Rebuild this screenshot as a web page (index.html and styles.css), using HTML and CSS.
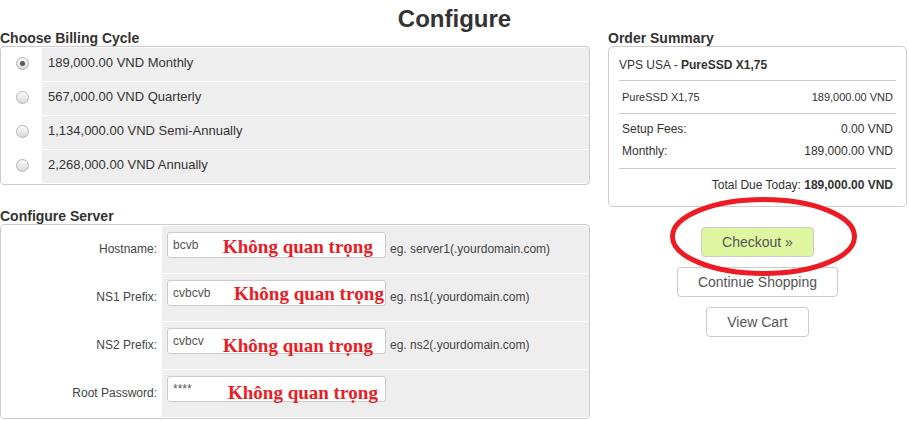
FILE: index.html
```html
<!DOCTYPE html>
<html lang="vi">
<head>
  <meta charset="UTF-8" />
  <meta name="viewport" content="width=device-width, initial-scale=1.0" />
  <title>Configure</title>
  <link rel="stylesheet" href="styles.css">
</head>
<body>
  <h1 class="page-title">Configure</h1>

  <div class="columns">
    <!-- Left: billing + server config -->
    <div class="main-col">
      <h3 class="section-title">Choose Billing Cycle</h3>
      <div class="cycle-box">
        <div class="cycle-row">
          <div class="cycle-radio"><span class="radio checked"></span></div>
          <div class="cycle-label">189,000.00 VND Monthly</div>
        </div>
        <div class="cycle-row">
          <div class="cycle-radio"><span class="radio"></span></div>
          <div class="cycle-label">567,000.00 VND Quarterly</div>
        </div>
        <div class="cycle-row">
          <div class="cycle-radio"><span class="radio"></span></div>
          <div class="cycle-label">1,134,000.00 VND Semi-Annually</div>
        </div>
        <div class="cycle-row">
          <div class="cycle-radio"><span class="radio"></span></div>
          <div class="cycle-label">2,268,000.00 VND Annually</div>
        </div>
      </div>

      <h3 class="section-title server-title">Configure Server</h3>
      <div class="server-box">
        <div class="server-row">
          <div class="server-label">Hostname:</div>
          <div class="server-field">
            <div class="field">
              <input type="text" value="bcvb">
              <span class="note note-1">Không quan trọng</span>
            </div>
            <span class="hint">eg. server1(.yourdomain.com)</span>
          </div>
        </div>
        <div class="server-row">
          <div class="server-label">NS1 Prefix:</div>
          <div class="server-field">
            <div class="field">
              <input type="text" value="cvbcvb">
              <span class="note note-2">Không quan trọng</span>
            </div>
            <span class="hint">eg. ns1(.yourdomain.com)</span>
          </div>
        </div>
        <div class="server-row">
          <div class="server-label">NS2 Prefix:</div>
          <div class="server-field">
            <div class="field">
              <input type="text" value="cvbcv">
              <span class="note note-3">Không quan trọng</span>
            </div>
            <span class="hint">eg. ns2(.yourdomain.com)</span>
          </div>
        </div>
        <div class="server-row">
          <div class="server-label">Root Password:</div>
          <div class="server-field">
            <div class="field">
              <input type="text" value="****">
              <span class="note note-4">Không quan trọng</span>
            </div>
          </div>
        </div>
      </div>
    </div>

    <!-- Right: order summary -->
    <div class="side-col">
      <h3 class="section-title">Order Summary</h3>
      <div class="summary">
        <div class="summary-title">VPS USA - <b>PureSSD X1,75</b></div>
        <div class="summary-item">
          <span>PureSSD X1,75</span>
          <span>189,000.00 VND</span>
        </div>
        <div class="summary-fees">
          <div class="fee-row"><span>Setup Fees:</span><span>0.00 VND</span></div>
          <div class="fee-row"><span>Monthly:</span><span>189,000.00 VND</span></div>
        </div>
        <div class="summary-total">Total Due Today: <b>189,000.00 VND</b></div>
      </div>

      <div class="actions">
        <button class="btn btn-checkout">Checkout &raquo;</button>
        <button class="btn">Continue Shopping</button>
        <button class="btn">View Cart</button>
        <!-- hand-drawn highlight -->
        <svg class="circle-mark" width="188" height="80" viewBox="0 0 188 80">
          <ellipse cx="93.5" cy="39.5" rx="91" ry="37" fill="none" stroke="#ed1c24" stroke-width="5"/>
        </svg>
      </div>
    </div>
  </div>
</body>
</html>
```

FILE: styles.css
```css
body {
  margin: 0;
  font-family: "Liberation Sans", Arial, sans-serif;
  color: #333;
  background: #fff;
}
.page-title {
  margin: 0;
  padding-top: 8px;
  font-size: 24px;
  line-height: 22px;
  text-align: center;
  color: #333;
}
.columns {
  display: flex;
  gap: 18px;
}
.main-col {
  width: 590px;
}
.side-col {
  width: 299px;
}
.section-title {
  margin: 0;
  font-size: 14px;
  line-height: 16px;
  color: #333;
}
.server-title {
  margin-top: 23px;
}
/* Billing cycle */
.cycle-box {
  border: 1px solid #ccc;
  border-radius: 4px;
  padding: 1px 0;
  overflow: hidden;
}
.cycle-row {
  display: flex;
  height: 33px;
}
.cycle-row + .cycle-row {
  border-top: 1px solid #fff;
}
.cycle-radio {
  width: 41px;
  background: #fff;
}
.cycle-label {
  flex: 1;
  background: #eee;
  padding: 7px 6px 0;
  font-size: 13px;
  line-height: 15px;
  color: #333;
}
.radio {
  display: block;
  position: relative;
  width: 11px;
  height: 11px;
  margin: 9px 0 0 15px;
  border: 1px solid #b5b5b5;
  border-radius: 50%;
  background: linear-gradient(#fbfbfb, #d9d9d9);
}
.radio.checked::after {
  content: "";
  position: absolute;
  left: 3px;
  top: 3px;
  width: 5px;
  height: 5px;
  border-radius: 50%;
  background: #5c5c5c;
}
/* Server config */
.server-box {
  border: 1px solid #ccc;
  border-radius: 4px;
  padding: 1px 0;
  overflow: hidden;
}
.server-row {
  display: flex;
  height: 47px;
}
.server-row + .server-row {
  border-top: 1px solid #fff;
}
.server-label {
  width: 161px;
  box-sizing: border-box;
  padding: 16px 5px 0 0;
  text-align: right;
  font-size: 12px;
  line-height: 14px;
  color: #444;
  background: #fff;
}
.server-field {
  flex: 1;
  display: flex;
  align-items: flex-start;
  padding: 6px 0 0 5px;
  background: #eee;
}
.field {
  position: relative;
}
.field input {
  display: block;
  width: 219px;
  height: 26px;
  box-sizing: border-box;
  padding: 0 5px;
  border: 1px solid #ccc;
  border-radius: 3px;
  font-family: "Liberation Sans", Arial, sans-serif;
  font-size: 12px;
  color: #555;
  background: #fff;
}
.hint {
  margin: 10px 0 0 4px;
  font-size: 12px;
  line-height: 14px;
  color: #444;
}
.note {
  position: absolute;
  font-family: "Liberation Serif", "Times New Roman", serif;
  font-weight: bold;
  font-size: 19px;
  line-height: 19px;
  color: #ed1c24;
  white-space: nowrap;
  pointer-events: none;
}
.note-1 { left: 56px; top: 5px; }
.note-2 { left: 67px; top: 4px; }
.note-3 { left: 56px; top: 8px; }
.note-4 { left: 61px; top: 7px; }
/* Order summary */
.summary {
  border: 1px solid #ccc;
  border-radius: 5px;
  padding: 10px 10px 10px;
  font-size: 12px;
  color: #333;
}
.summary-title {
  line-height: 16px;
  padding-bottom: 7px;
}
.summary-item {
  display: flex;
  justify-content: space-between;
  border-top: 1px solid #ccc;
  padding: 8px 3px;
  font-size: 11px;
  line-height: 16px;
}
.summary-fees {
  border-top: 1px solid #ccc;
  padding: 4px 3px 6px;
}
.fee-row {
  display: flex;
  justify-content: space-between;
  line-height: 22px;
}
.summary-total {
  border-top: 1px solid #ccc;
  padding: 7px 3px 2px;
  line-height: 18px;
  text-align: right;
}
/* Buttons */
.actions {
  position: relative;
  display: flex;
  flex-direction: column;
  align-items: center;
  gap: 10px;
  padding-top: 20px;
}
.btn {
  height: 30px;
  padding: 0 20px;
  border: 1px solid #ccc;
  border-radius: 4px;
  background: #fff;
  font-family: "Liberation Sans", Arial, sans-serif;
  font-size: 14px;
  color: #555;
  cursor: pointer;
}
.btn-checkout {
  background: #def7a0;
}
.circle-mark {
  position: absolute;
  left: 62px;
  top: -10px;
  pointer-events: none;
}
```
